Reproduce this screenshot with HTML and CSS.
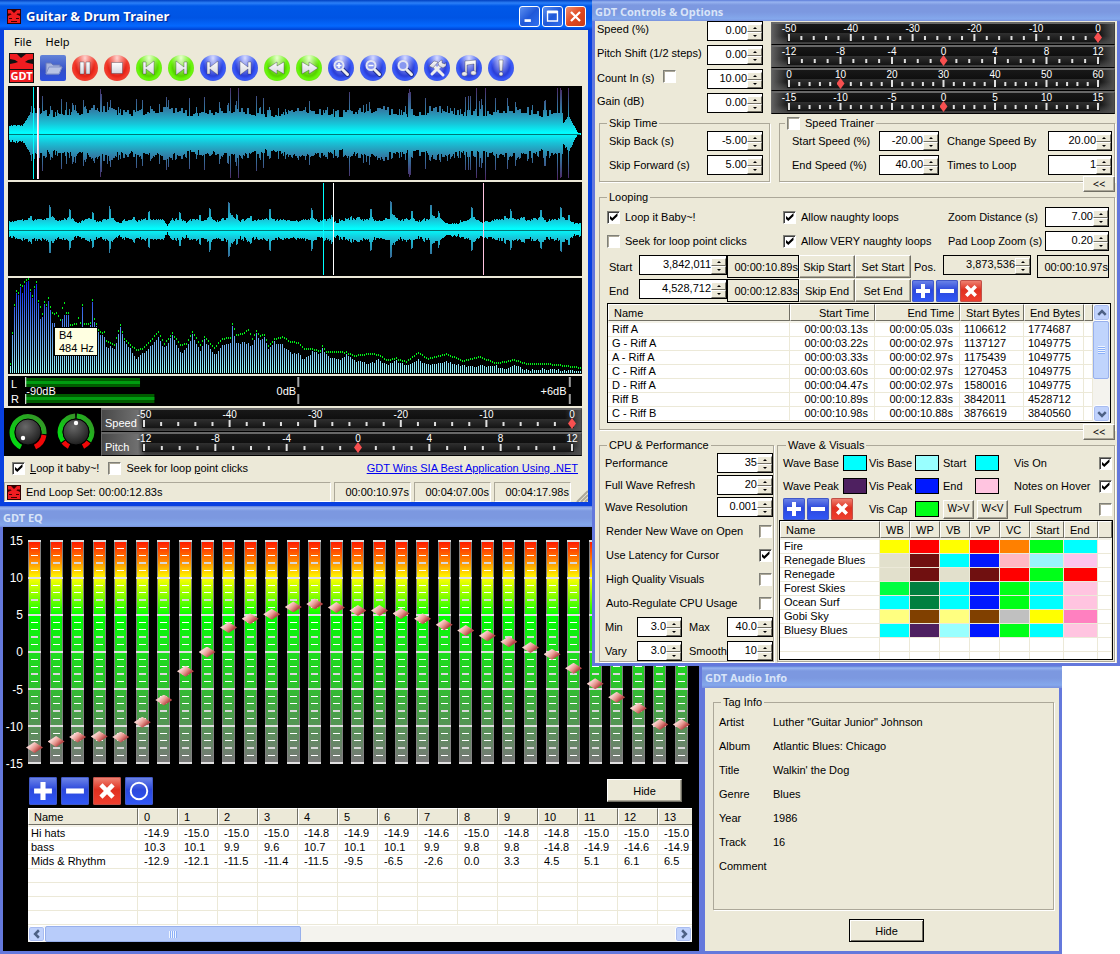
FILE: index.html
```html
<!DOCTYPE html>
<html lang="en">
<head>
<meta charset="utf-8">
<title>Guitar &amp; Drum Trainer</title>
<link rel="stylesheet" href="styles.css">
</head>
<body>
<svg class="defs" aria-hidden="true">
  <defs>
    <linearGradient id="metal" x1="0" y1="0" x2="0" y2="1"><stop offset="0" stop-color="#fff"/><stop offset="1" stop-color="#d4d4dc"/></linearGradient>
    <linearGradient id="waveFill" x1="0" y1="0" x2="0" y2="94" gradientUnits="userSpaceOnUse">
      <stop offset="0" stop-color="#4e2060"/><stop offset=".26" stop-color="#3080a8"/><stop offset=".4" stop-color="#18c4d8"/><stop offset=".5" stop-color="#00ffff"/><stop offset=".6" stop-color="#18c4d8"/><stop offset=".74" stop-color="#3080a8"/><stop offset="1" stop-color="#4e2060"/>
    </linearGradient>
    <linearGradient id="specFill" x1="0" y1="0" x2="0" y2="96" gradientUnits="userSpaceOnUse">
      <stop offset="0" stop-color="#0a1cf0"/><stop offset=".35" stop-color="#3a68e8"/><stop offset=".8" stop-color="#7cc4f0"/><stop offset="1" stop-color="#98ffff"/>
    </linearGradient>
    <radialGradient id="knob" cx=".4" cy=".3" r=".8"><stop offset="0" stop-color="#686868"/><stop offset="1" stop-color="#141414"/></radialGradient>
    <linearGradient id="arc" x1="0" y1="1" x2="1" y2="0"><stop offset="0" stop-color="#00e010"/><stop offset="1" stop-color="#389028"/></linearGradient>
  </defs>
  <symbol id="brand" viewBox="0 0 14 15"><path fill="#300" d="M0 0h14v15H0z"/><path fill="#f01c20" d="M1 1h3l3 3 3-3h3v4H9l4 2v7H1V7l4-2H1z"/><path stroke="#400" fill="none" d="M1 5h3M10 5h3M2 9.500h3M9 9.500h3M4 12.500h6"/></symbol>
  <symbol id="folder" viewBox="0 0 26 26"><path d="M6 19V8h5l2 2h7v2h2l-3 7z" fill="#a8b4dc" stroke="#6878b8"/><path d="M6 19l3-7h13l-3 7z" fill="#b8c2e4" stroke="#8090c8"/></symbol>
  <symbol id="pause" viewBox="0 0 26 26"><path d="M8 7h4v12H8zM14 7h4v12h-4z"/></symbol>
  <symbol id="stop" viewBox="0 0 26 26"><path d="M7.500 7.500h11v11h-11z"/></symbol>
  <symbol id="prev" viewBox="0 0 26 26"><path d="M7 7h3v5l8-6v14l-8-6v5H7z"/></symbol>
  <symbol id="next" viewBox="0 0 26 26"><path d="M19 7h-3v5L8 6v14l8-6v5h3z"/></symbol>
  <symbol id="rew" viewBox="0 0 26 26"><path d="M13 7v4l7-4v12l-7-4v4l-9-6z"/></symbol>
  <symbol id="ff" viewBox="0 0 26 26"><path d="M13 7v4L6 7v12l7-4v4l9-6z"/></symbol>
  <symbol id="lens" viewBox="0 0 26 26"><path fill="none" stroke="#223088" stroke-width="5" stroke-linecap="round" d="M14.500 14.500l5 5"/><circle cx="11" cy="10.500" r="4.500" fill="#8898f0" stroke="#e4e6f2" stroke-width="2"/><path fill="none" stroke="#eee" stroke-width="3" stroke-linecap="round" d="M15 15l4.500 4.500"/></symbol>
  <symbol id="zin" viewBox="0 0 26 26"><use href="#lens"/><path d="M8.500 10.500h5M11 8v5" fill="none" stroke="#fff" stroke-width="1.500"/></symbol>
  <symbol id="zout" viewBox="0 0 26 26"><use href="#lens"/><path d="M8.500 10.500h5" fill="none" stroke="#fff" stroke-width="1.500"/></symbol>
  <symbol id="tools" viewBox="0 0 26 26"><path fill="none" stroke="#eee" stroke-width="3" stroke-linecap="round" d="M8 19l9-9M10 11l9 9"/><path d="M5 11l5-5 4 1-5 6zM16 6l2-1v3l3 1 1-2v4l-3 2-4-2-1-3z"/></symbol>
  <symbol id="note" viewBox="0 0 26 26"><path d="M9 6l11-1v13h-2V9l-7 1v9H9z"/><ellipse cx="8.500" cy="19" rx="2.800" ry="2.200"/><ellipse cx="17.500" cy="18" rx="2.800" ry="2.200"/></symbol>
  <symbol id="bang" viewBox="0 0 26 26"><path d="M11 5h4l-.5 11h-3z"/><circle cx="13" cy="19" r="2"/></symbol>
  <symbol id="plus" viewBox="0 0 22 22"><path d="M9 4h4v5h5v4h-5v5H9v-5H4V9h5z"/></symbol>
  <symbol id="minus" viewBox="0 0 22 22"><path d="M4 9h14v4H4z"/></symbol>
  <symbol id="cross" viewBox="0 0 22 22"><path d="M5 7.500L7.500 5 11 8.500 14.500 5 17 7.500 13.500 11l3.500 3.500-2.500 2.500-3.500-3.500L7.500 17 5 14.500 8.500 11z"/></symbol>
  <symbol id="ring" viewBox="0 0 22 22"><circle cx="11" cy="11" r="6.500" style="fill:none;stroke:#fff;stroke-width:1.500"/></symbol>
</svg>

<main class="desktop">

<section class="window eq" aria-label="GDT EQ">
  <h2 class="caption">GDT EQ</h2>
  <div class="eq-body">
    <div class="eq-graph">
      <div class="eq-scale"><span>15</span><span>10</span><span>5</span><span>0</span><span>-5</span><span>-10</span><span>-15</span></div>
      <div class="bands" id="bands"></div>
    </div>
    <div class="eq-tools">
      <button class="sq big" aria-label="Add"><svg><use href="#plus"/></svg></button>
      <button class="sq big" aria-label="Remove"><svg><use href="#minus"/></svg></button>
      <button class="sq big red" aria-label="Delete"><svg><use href="#cross"/></svg></button>
      <button class="sq big" aria-label="Reset"><svg><use href="#ring"/></svg></button>
      <button class="btn hide">Hide</button>
    </div>
    <div class="eq-list">
      <div class="clip">
      <table class="grid eq-table">
        <thead><tr><th class="name">Name</th><th>0</th><th>1</th><th>2</th><th>3</th><th>4</th><th>5</th><th>6</th><th>7</th><th>8</th><th>9</th><th>10</th><th>11</th><th>12</th><th>13</th></tr></thead>
        <tbody>
        <tr><td>Hi hats</td><td>-14.9</td><td>-15.0</td><td>-15.0</td><td>-15.0</td><td>-14.8</td><td>-14.9</td><td>-14.9</td><td>-14.6</td><td>-15.0</td><td>-14.8</td><td>-14.8</td><td>-15.0</td><td>-15.0</td><td>-15.0</td></tr>
        <tr><td>bass</td><td>10.3</td><td>10.1</td><td>9.9</td><td>9.6</td><td>10.7</td><td>10.1</td><td>10.1</td><td>9.9</td><td>9.8</td><td>9.8</td><td>-14.8</td><td>-14.9</td><td>-14.6</td><td>-14.9</td></tr>
        <tr><td>Mids &amp; Rhythm</td><td>-12.9</td><td>-12.1</td><td>-11.5</td><td>-11.4</td><td>-11.5</td><td>-9.5</td><td>-6.5</td><td>-2.6</td><td>0.0</td><td>3.3</td><td>4.5</td><td>5.1</td><td>6.1</td><td>6.5</td></tr>
        <tr><td></td><td></td><td></td><td></td><td></td><td></td><td></td><td></td><td></td><td></td><td></td><td></td><td></td><td></td><td></td></tr>
        <tr><td></td><td></td><td></td><td></td><td></td><td></td><td></td><td></td><td></td><td></td><td></td><td></td><td></td><td></td><td></td></tr>
        <tr><td></td><td></td><td></td><td></td><td></td><td></td><td></td><td></td><td></td><td></td><td></td><td></td><td></td><td></td><td></td></tr>
        <tr><td></td><td></td><td></td><td></td><td></td><td></td><td></td><td></td><td></td><td></td><td></td><td></td><td></td><td></td><td></td></tr>
        </tbody>
      </table>
      </div>
      <div class="scrollbar across">
        <button aria-label="Scroll left"><svg viewBox="0 0 8 8"><path d="M5.500 1l-3 3 3 3"/></svg></button>
        <span class="thumb"></span>
        <button class="far" aria-label="Scroll right"><svg viewBox="0 0 8 8"><path d="M2.500 1l3 3-3 3"/></svg></button>
      </div>
    </div>
  </div>
</section>

<section class="window info" aria-label="GDT Audio Info">
  <h2 class="caption">GDT Audio Info</h2>
  <div class="info-body">
    <fieldset>
      <legend>Tag Info</legend>
      <dl>
        <dt>Artist</dt><dd>Luther "Guitar Junior" Johnson</dd>
        <dt>Album</dt><dd>Atlantic Blues: Chicago</dd>
        <dt>Title</dt><dd>Walkin' the Dog</dd>
        <dt>Genre</dt><dd>Blues</dd>
        <dt>Year</dt><dd>1986</dd>
        <dt>Track</dt><dd>16</dd>
        <dt>Comment</dt><dd></dd>
      </dl>
    </fieldset>
    <button class="btn hide default">Hide</button>
  </div>
</section>

<section class="window controls" aria-label="GDT Controls and Options">
  <h2 class="caption">GDT Controls &amp; Options</h2>
  <div class="controls-body">
    <div class="top">
      <div class="params">
        <label for="speed">Speed (%)</label><span class="spin"><input id="speed" value="0.00"><span class="arrows"><button aria-label="Up"></button><button aria-label="Down"></button></span></span>
        <label for="pitch">Pitch Shift (1/2 steps)</label><span class="spin"><input id="pitch" value="0.00"><span class="arrows"><button aria-label="Up"></button><button aria-label="Down"></button></span></span>
        <span class="countin"><label for="count">Count In (s)</label><input type="checkbox" aria-label="Enable count in"></span><span class="spin"><input id="count" value="10.00"><span class="arrows"><button aria-label="Up"></button><button aria-label="Down"></button></span></span>
        <label for="gain">Gain (dB)</label><span class="spin"><input id="gain" value="0.00"><span class="arrows"><button aria-label="Up"></button><button aria-label="Down"></button></span></span>
      </div>
      <div class="gauges">
        <div class="gauge"><div class="scale" data-steps="25" data-major="5"><div class="nums"><span>-50</span><span>-40</span><span>-30</span><span>-20</span><span>-10</span><span>0</span></div><div class="track"><svg></svg><input type="range" min="-50" max="0" value="0" aria-label="Speed"></div></div></div>
        <div class="gauge"><div class="scale" data-steps="24" data-major="4"><div class="nums"><span>-12</span><span>-8</span><span>-4</span><span>0</span><span>4</span><span>8</span><span>12</span></div><div class="track"><svg></svg><input type="range" min="-12" max="12" value="0" aria-label="Pitch shift"></div></div></div>
        <div class="gauge"><div class="scale" data-steps="30" data-major="5"><div class="nums"><span>0</span><span>10</span><span>20</span><span>30</span><span>40</span><span>50</span><span>60</span></div><div class="track"><svg></svg><input type="range" min="0" max="60" value="10" aria-label="Count in"></div></div></div>
        <div class="gauge"><div class="scale" data-steps="30" data-major="5"><div class="nums"><span>-15</span><span>-10</span><span>-5</span><span>0</span><span>5</span><span>10</span><span>15</span></div><div class="track"><svg></svg><input type="range" min="-15" max="15" value="0" aria-label="Gain"></div></div></div>
      </div>
    </div>

    <div class="group pair-a">
      <fieldset class="skip">
        <legend>Skip Time</legend>
        <label for="sb">Skip Back (s)</label><span class="spin"><input id="sb" value="-5.00"><span class="arrows"><button aria-label="Up"></button><button aria-label="Down"></button></span></span>
        <label for="sf">Skip Forward (s)</label><span class="spin"><input id="sf" value="5.00"><span class="arrows"><button aria-label="Up"></button><button aria-label="Down"></button></span></span>
      </fieldset>
      <fieldset class="trainer">
        <legend><label class="check"><input type="checkbox">Speed Trainer</label></legend>
        <label for="ss">Start Speed (%)</label><span class="spin"><input id="ss" value="-20.00"><span class="arrows"><button aria-label="Up"></button><button aria-label="Down"></button></span></span>
        <label for="cs" class="second">Change Speed By</label><span class="spin"><input id="cs" value="20.00"><span class="arrows"><button aria-label="Up"></button><button aria-label="Down"></button></span></span>
        <label for="es">End Speed (%)</label><span class="spin"><input id="es" value="40.00"><span class="arrows"><button aria-label="Up"></button><button aria-label="Down"></button></span></span>
        <label for="tl" class="second">Times to Loop</label><span class="spin"><input id="tl" value="1"><span class="arrows"><button aria-label="Up"></button><button aria-label="Down"></button></span></span>
      </fieldset>
      <button class="btn fold">&lt;&lt;</button>
    </div>

    <div class="group">
      <fieldset class="looping">
        <legend>Looping</legend>
        <div class="loop-opts">
          <label class="check"><input type="checkbox" checked>Loop it Baby~!</label>
          <label class="check"><input type="checkbox" checked>Allow naughty loops</label>
          <label for="zd">Zoom Distance (s)</label><span class="spin"><input id="zd" value="7.00"><span class="arrows"><button aria-label="Up"></button><button aria-label="Down"></button></span></span>
          <label class="check"><input type="checkbox">Seek for loop point clicks</label>
          <label class="check"><input type="checkbox" checked>Allow VERY naughty loops</label>
          <label for="pz">Pad Loop Zoom (s)</label><span class="spin"><input id="pz" value="0.20"><span class="arrows"><button aria-label="Up"></button><button aria-label="Down"></button></span></span>
        </div>
        <div class="points">
          <label for="ls">Start</label><span class="spin wide"><input id="ls" value="3,842,011"><span class="arrows"><button aria-label="Up"></button><button aria-label="Down"></button></span></span><output class="time">00:00:10.89s</output><button class="btn">Skip Start</button><button class="btn">Set Start</button>
          <label for="lp" class="pos">Pos.</label><span class="spin wide flat"><input id="lp" value="3,873,536"><span class="arrows"><button aria-label="Up"></button><button aria-label="Down"></button></span></span><output class="time last">00:00:10.97s</output>
        </div>
        <div class="points">
          <label for="le">End</label><span class="spin wide"><input id="le" value="4,528,712"><span class="arrows"><button aria-label="Up"></button><button aria-label="Down"></button></span></span><output class="time">00:00:12.83s</output><button class="btn">Skip End</button><button class="btn">Set End</button>
          <span class="trio"><button class="sq" aria-label="Add"><svg><use href="#plus"/></svg></button><button class="sq" aria-label="Remove"><svg><use href="#minus"/></svg></button><button class="sq red" aria-label="Delete"><svg><use href="#cross"/></svg></button></span>
        </div>
        <div class="listbox loops">
          <table class="grid">
            <thead><tr><th class="c-name">Name</th><th class="c-time num">Start Time</th><th class="c-time num">End Time</th><th class="c-bytes">Start Bytes</th><th class="c-ends">End Bytes</th><th class="c-rest"></th></tr></thead>
            <tbody>
            <tr><td>Riff A</td><td class="num">00:00:03.13s</td><td class="num">00:00:05.03s</td><td>1106612</td><td>1774687</td><td></td></tr>
            <tr><td>G - Riff A</td><td class="num">00:00:03.22s</td><td class="num">00:00:02.97s</td><td>1137127</td><td>1049775</td><td></td></tr>
            <tr><td>A - Riff A</td><td class="num">00:00:03.33s</td><td class="num">00:00:02.97s</td><td>1175439</td><td>1049775</td><td></td></tr>
            <tr><td>C - Riff A</td><td class="num">00:00:03.60s</td><td class="num">00:00:02.97s</td><td>1270453</td><td>1049775</td><td></td></tr>
            <tr><td>D - Riff A</td><td class="num">00:00:04.47s</td><td class="num">00:00:02.97s</td><td>1580016</td><td>1049775</td><td></td></tr>
            <tr><td>Riff B</td><td class="num">00:00:10.89s</td><td class="num">00:00:12.83s</td><td>3842011</td><td>4528712</td><td></td></tr>
            <tr><td>C - Riff B</td><td class="num">00:00:10.98s</td><td class="num">00:00:10.88s</td><td>3876619</td><td>3840560</td><td></td></tr>
            </tbody>
          </table>
          <div class="scrollbar down">
            <button aria-label="Scroll up"><svg viewBox="0 0 8 8"><path d="M1 5.500l3-3 3 3"/></svg></button>
            <span class="thumb"></span>
            <button class="far" aria-label="Scroll down"><svg viewBox="0 0 8 8"><path d="M1 2.500l3 3 3-3"/></svg></button>
          </div>
        </div>
      </fieldset>
      <button class="btn fold">&lt;&lt;</button>
    </div>

    <div class="group pair-b">
      <fieldset class="cpu">
        <legend>CPU &amp; Performance</legend>
        <div class="cpu-row"><label for="pf">Performance</label><span class="spin"><input id="pf" value="35"><span class="arrows"><button aria-label="Up"></button><button aria-label="Down"></button></span></span></div>
        <div class="cpu-row"><label for="fw">Full Wave Refresh</label><span class="spin"><input id="fw" value="20"><span class="arrows"><button aria-label="Up"></button><button aria-label="Down"></button></span></span></div>
        <div class="cpu-row"><label for="wr">Wave Resolution</label><span class="spin"><input id="wr" value="0.001"><span class="arrows"><button aria-label="Up"></button><button aria-label="Down"></button></span></span></div>
        <label class="cpu-check">Render New Wave on Open<input type="checkbox"></label>
        <label class="cpu-check">Use Latency for Cursor<input type="checkbox" checked></label>
        <label class="cpu-check">High Quality Visuals<input type="checkbox"></label>
        <label class="cpu-check">Auto-Regulate CPU Usage<input type="checkbox"></label>
        <div class="limits">
          <label for="mn">Min</label><span class="spin"><input id="mn" value="3.0"><span class="arrows"><button aria-label="Up"></button><button aria-label="Down"></button></span></span>
          <label for="mx" class="r">Max</label><span class="spin"><input id="mx" value="40.0"><span class="arrows"><button aria-label="Up"></button><button aria-label="Down"></button></span></span>
          <label for="vy">Vary</label><span class="spin"><input id="vy" value="3.0"><span class="arrows"><button aria-label="Up"></button><button aria-label="Down"></button></span></span>
          <label for="sm" class="r">Smooth</label><span class="spin"><input id="sm" value="10"><span class="arrows"><button aria-label="Up"></button><button aria-label="Down"></button></span></span>
        </div>
      </fieldset>
      <fieldset class="visuals">
        <legend>Wave &amp; Visuals</legend>
        <div class="swatches">
          <label for="k1">Wave Base</label><input type="color" id="k1" value="#00ffff">
          <label for="k2">Vis Base</label><input type="color" id="k2" value="#99ffff">
          <label for="k3">Start</label><input type="color" id="k3" value="#00ffff">
          <label for="v1">Vis On</label><input type="checkbox" id="v1" checked>
          <label for="k4">Wave Peak</label><input type="color" id="k4" value="#4e2060">
          <label for="k5">Vis Peak</label><input type="color" id="k5" value="#0018ff">
          <label for="k6">End</label><input type="color" id="k6" value="#ffc4e0">
          <label for="v2">Notes on Hover</label><input type="checkbox" id="v2" checked>
          <span class="trio two"><button class="sq" aria-label="Add"><svg><use href="#plus"/></svg></button><button class="sq" aria-label="Remove"><svg><use href="#minus"/></svg></button><button class="sq red" aria-label="Delete"><svg><use href="#cross"/></svg></button></span>
          <label for="k7">Vis Cap</label><input type="color" id="k7" value="#00ff18">
          <span class="swap two"><button class="btn">W&gt;V</button><button class="btn">W&lt;V</button></span>
          <label for="v3">Full Spectrum</label><input type="checkbox" id="v3">
        </div>
        <div class="listbox themes">
          <table class="grid">
            <thead><tr><th>Name</th><th class="c30">WB</th><th class="c30">WP</th><th class="c30">VB</th><th class="c30">VP</th><th class="c30">VC</th><th class="c34">Start</th><th class="c34">End</th><th class="c14"></th></tr></thead>
            <tbody>
            <tr><td>Fire</td><td class="yellow"></td><td class="crimson"></td><td class="yellow"></td><td class="crimson"></td><td class="orange"></td><td class="lime"></td><td class="cyan"></td><td></td></tr>
            <tr><td>Renegade Blues</td><td class="bone"></td><td class="maroon"></td><td class="cyan"></td><td class="blue"></td><td class="salmon"></td><td class="ice"></td><td class="orchid"></td><td></td></tr>
            <tr><td>Renegade</td><td class="bone"></td><td class="maroon"></td><td class="bone"></td><td class="maroon"></td><td class="crimson"></td><td class="lime"></td><td class="crimson"></td><td></td></tr>
            <tr><td>Forest Skies</td><td class="leaf"></td><td class="forest"></td><td class="cyan"></td><td class="blue"></td><td class="lime"></td><td class="cyan"></td><td class="pink"></td><td></td></tr>
            <tr><td>Ocean Surf</td><td class="cyan"></td><td class="forest"></td><td class="cyan"></td><td class="blue"></td><td class="lime"></td><td class="cyan"></td><td class="pink"></td><td></td></tr>
            <tr><td>Gobi Sky</td><td class="sand"></td><td class="brown"></td><td class="sand"></td><td class="brown"></td><td class="silver"></td><td class="yellow"></td><td class="hot"></td><td></td></tr>
            <tr><td>Bluesy Blues</td><td class="cyan"></td><td class="plum"></td><td class="aqua"></td><td class="blue"></td><td class="lime"></td><td class="cyan"></td><td class="pink"></td><td></td></tr>
            <tr><td></td><td></td><td></td><td></td><td></td><td></td><td></td><td></td><td></td></tr>
            <tr><td></td><td></td><td></td><td></td><td></td><td></td><td></td><td></td><td></td></tr>
            </tbody>
          </table>
        </div>
      </fieldset>
    </div>
  </div>
</section>

<section class="window player" aria-label="Guitar and Drum Trainer">
  <header class="titlebar">
    <svg class="app-icon"><use href="#brand"/></svg>
    <h1>Guitar &amp; Drum Trainer</h1>
    <button class="sys" aria-label="Minimize"><svg viewBox="0 0 21 21"><path d="M5 15h7" stroke-width="3"/></svg></button>
    <button class="sys" aria-label="Maximize"><svg viewBox="0 0 21 21"><path d="M5 5.500h11" stroke-width="3"/><path d="M5 5h11v10.500H5z" stroke-width="1.500"/></svg></button>
    <button class="sys close" aria-label="Close"><svg viewBox="0 0 21 21"><path d="M5.500 5.500l10 10M15.500 5.500l-10 10" stroke-width="2.500"/></svg></button>
  </header>
  <div class="player-body">
    <nav class="menu"><button>File</button><button>Help</button></nav>
    <div class="toolbar">
      <svg class="logo" viewBox="0 0 25 30" role="img" aria-label="GDT"><path d="M0 0h25v30H0z" fill="#111"/><path fill="#f01c20" d="M1 1h7l4 4 5-4h7v5l-5 1-3 2 3 1 5 1v5H1v-5l5-1 3-1-3-2-5-1z"/><path fill="#f01c20" d="M1 17h23v12H1z"/><text x="12.500" y="27" text-anchor="middle">GDT</text></svg>
      <button class="tile" aria-label="Open"><svg><use href="#folder"/></svg></button>
      <button class="round red" aria-label="Pause"><svg><use href="#pause"/></svg></button>
      <button class="round red" aria-label="Stop"><svg><use href="#stop"/></svg></button>
      <button class="round green" aria-label="Skip to loop start"><svg><use href="#prev"/></svg></button>
      <button class="round green" aria-label="Skip to loop end"><svg><use href="#next"/></svg></button>
      <button class="round" aria-label="Set loop start"><svg><use href="#prev"/></svg></button>
      <button class="round" aria-label="Set loop end"><svg><use href="#next"/></svg></button>
      <button class="round green" aria-label="Rewind"><svg><use href="#rew"/></svg></button>
      <button class="round green" aria-label="Fast forward"><svg><use href="#ff"/></svg></button>
      <button class="round" aria-label="Zoom in"><svg><use href="#zin"/></svg></button>
      <button class="round" aria-label="Zoom out"><svg><use href="#zout"/></svg></button>
      <button class="round" aria-label="Zoom"><svg><use href="#lens"/></svg></button>
      <button class="round" aria-label="Options"><svg><use href="#tools"/></svg></button>
      <button class="round" aria-label="Audio info"><svg><use href="#note"/></svg></button>
      <button class="round" aria-label="About"><svg><use href="#bang"/></svg></button>
    </div>
    <div class="screens">
      <svg class="screen" id="wave" viewBox="0 0 574 94" preserveAspectRatio="none" role="img" aria-label="Full waveform"></svg>
      <svg class="screen" id="zoomwave" viewBox="0 0 574 94" preserveAspectRatio="none" role="img" aria-label="Zoomed waveform"></svg>
      <div class="spectrum">
        <svg class="screen tall" id="spec" viewBox="0 0 574 96" preserveAspectRatio="none" role="img" aria-label="Spectrum"></svg>
        <div class="tip" role="tooltip">B4<br>484 Hz</div>
      </div>
      <svg class="meter" role="img" aria-label="Level meter">
        <g class="bar"><rect x="3%" y="2" width="20%" height="9"/><rect x="3%" y="18" width="22.500%" height="9"/></g>
        <g class="glow"><rect x="3%" y="5" width="20%" height="3"/><rect x="3%" y="21" width="22.500%" height="3"/></g>
        <g class="edge"><rect x="3%" y="1" width="1" height="10"/><rect x="3%" y="18" width="1" height="10"/></g>
        <g class="mark"><rect x="50.400%" y="1" width="2" height="10"/><rect x="50.400%" y="18" width="2" height="10"/><rect x="97.700%" y="1" width="2" height="10"/><rect x="97.700%" y="18" width="2" height="10"/></g>
        <text x="3" y="12">L</text><text x="3" y="27">R</text><text x="3.200%" y="19">-90dB</text><text x="50.200%" y="19" text-anchor="end">0dB</text><text x="97.300%" y="19" text-anchor="end">+6dB</text>
      </svg>
    </div>
    <div class="deck">
      <div class="knobs">
        <svg viewBox="0 0 38 38" role="img" aria-label="Volume"><g fill="none" stroke-width="5"><path stroke="url(#arc)" d="M12 34A16 16 0 1 1 35 21"/><path stroke="#f00808" d="M35 22A16 16 0 0 1 26 34"/></g><circle cx="19" cy="19" r="13" fill="url(#knob)" stroke="#000"/><circle cx="14" cy="25" r="2.200" fill="#fff"/></svg>
        <svg viewBox="0 0 38 38" role="img" aria-label="Balance"><g fill="none" stroke-width="5"><path stroke="url(#arc)" d="M6 28A16 16 0 0 1 18.200 3"/><path stroke="url(#arc)" d="M19.800 3A16 16 0 0 1 32 28"/><path stroke="#f00808" d="M6.500 29A16 16 0 0 0 12 33.500M31.500 29A16 16 0 0 1 26 33.500"/></g><circle cx="19" cy="19" r="13" fill="url(#knob)" stroke="#000"/><circle cx="19" cy="10" r="2.200" fill="#fff"/></svg>
      </div>
      <div class="gauges">
        <div class="gauge named"><label for="g1">Speed</label><div class="scale" data-steps="25" data-major="5"><div class="nums"><span>-50</span><span>-40</span><span>-30</span><span>-20</span><span>-10</span><span>0</span></div><div class="track"><svg></svg><input id="g1" type="range" min="-50" max="0" value="0"></div></div></div>
        <div class="gauge named"><label for="g2">Pitch</label><div class="scale" data-steps="24" data-major="4"><div class="nums"><span>-12</span><span>-8</span><span>-4</span><span>0</span><span>4</span><span>8</span><span>12</span></div><div class="track"><svg></svg><input id="g2" type="range" min="-12" max="12" value="0"></div></div></div>
      </div>
    </div>
    <div class="quick">
      <label class="check"><input type="checkbox" checked><span><u>L</u>oop it baby~!</span></label>
      <label class="check"><input type="checkbox"><span>Seek for loop <u>p</u>oint clicks</span></label>
      <a href="#">GDT Wins SIA Best Application Using .NET</a>
    </div>
    <footer class="status">
      <span class="msg"><svg class="app-icon"><use href="#brand"/></svg>End Loop Set: 00:00:12.83s</span>
      <span class="cell">00:00:10.97s</span><span class="cell">00:04:07.00s</span><span class="cell">00:04:17.98s</span>
      <svg class="grip" viewBox="0 0 12 12"><path d="M1 12L12 1M5 12l7-7M9 12l3-3"/></svg>
    </footer>
  </div>
</section>
</main>
<script src="app.js"></script>
</body>
</html>
```
FILE: styles.css
```css
* { box-sizing: border-box; }
html, body { margin: 0; height: 100%; }
body {
  overflow: hidden;
  background: #fff;
  color: #000;
  font: 11px/14px "Liberation Sans", Arial, sans-serif;
}
button, input { font: inherit; color: inherit; margin: 0; padding: 0; }
button { border: 0; background: none; }
h1, h2, dl, dd { margin: 0; }
svg { display: block; }
.defs { position: absolute; width: 0; height: 0; }
.desktop { position: relative; min-height: 954px; }

/* windows */
.window { position: absolute; }
.eq { left: 0; top: 506px; width: 702px; }
.info { left: 702px; top: 666px; width: 360px; }
.controls { left: 592px; right: 0; top: 0; }
.player { left: 0; top: 0; width: 592px; }
.eq, .info, .controls {
  border: solid #6478dc;
  border-width: 0 3px 3px;
  background: #ece9d8;
}
.caption {
  margin: 0 -3px;
  padding: 4px 3px 0;
  height: 21px;
  font: bold 11px/16px "Noto Sans", sans-serif;
  color: #d8e4f8;
  background: linear-gradient(#5c7cd8, #98b4f0 2px, #7c98e0 5px, #7c98e0 12px, #84a8ec 19px, #7890dc);
}
.info .caption { height: 22px; }

/* shared controls */
.btn {
  background: #ece9d8;
  border: 1px solid;
  border-color: #fff #716f64 #716f64 #fff;
  box-shadow: inset -1px -1px 0 #aca899;
  text-align: center;
  white-space: nowrap;
}
.btn.hide { width: 75px; height: 23px; }
.btn.default { border-color: #000; box-shadow: inset 1px 1px 0 #fff, inset -1px -1px 0 #716f64; }
.spin {
  display: flex;
  width: 56px;
  height: 20px;
  background: #fff;
  border: 1px solid #000;
}
.spin input {
  flex: 1;
  min-width: 0;
  height: 15px;
  border: 0;
  background: none;
  text-align: right;
  outline: 0;
}
.arrows { display: flex; flex-direction: column; width: 15px; padding-top: 2px; }
.arrows button {
  flex: 1;
  display: grid;
  place-items: center;
  background: #ece9d8;
  border: 1px solid;
  border-color: #fff #716f64 #716f64 #fff;
}
.arrows button::before { content: ""; border: 2px solid transparent; border-top: 0; border-bottom-color: #000; }
.arrows button + button::before { border-top: 2px solid #000; border-bottom: 0; }
.spin.wide { width: 88px; }
.spin.flat { background: #ece9d8; }
input[type="checkbox"] {
  appearance: none;
  flex: none;
  display: grid;
  place-items: center;
  width: 13px;
  height: 13px;
  background: #fff;
  border: 1px solid;
  border-color: #808078 #fff #fff #808078;
  box-shadow: inset 1px 1px 0 #404040;
}
input[type="checkbox"]:not(:checked) { box-shadow: inset 1px 1px 0 #aca899; }
input[type="checkbox"]:checked::before {
  content: "";
  width: 8px;
  height: 8px;
  background: #000;
  clip-path: polygon(0 30%, 35% 62%, 100% 0, 100% 38%, 35% 100%, 0 68%);
}
.check { display: flex; align-items: center; gap: 5px; white-space: nowrap; }
fieldset {
  min-width: 0;
  margin: 0;
  padding: 0;
  border: 1px solid #aca899;
  box-shadow: 1px 1px 0 #fff;
}
legend { margin-left: 7px; padding: 0 2px; height: 14px; background: #ece9d8; }
.sq {
  display: block;
  width: 22px;
  height: 22px;
  border-radius: 2px;
  background: linear-gradient(#7088e8, #2c48dc 45%, #3058f8);
  box-shadow: inset 0 0 0 1px #4058c8;
}
.sq.red { background: linear-gradient(#f08878, #e03020 45%, #f04030); box-shadow: inset 0 0 0 1px #c05048; }
.sq.big { width: 28px; height: 28px; }
.sq svg { width: 100%; height: 100%; fill: #fff; }
.trio { display: flex; gap: 2px; }

/* list views */
.grid { width: 100%; table-layout: fixed; border-collapse: separate; border-spacing: 0; background: #fff; }
.grid th {
  height: 17px;
  padding: 0 5px;
  font-weight: normal;
  text-align: left;
  line-height: 14px;
  background: #ece9d8;
  border: 1px solid;
  border-color: #fff #716f64 #716f64 #fff;
  white-space: nowrap;
}
.grid td {
  height: 14px;
  padding: 0 6px 0 4px;
  line-height: 13px;
  border: solid #ece9d8;
  border-width: 0 1px 1px 0;
  white-space: nowrap;
  overflow: hidden;
}
.grid tbody tr:first-child td { height: 16px; border-top: 2px solid #f4f2e8; }
.grid .num { text-align: right; }
.listbox { border: 1px solid #000; background: #fff; overflow: hidden; }
.scrollbar { display: flex; background: #f4f3ee; }
.scrollbar.down { flex-direction: column; width: 17px; }
.scrollbar button {
  display: grid;
  place-items: center;
  width: 17px;
  height: 17px;
  background: #c0d2fc;
  border: 1px solid #fff;
  border-radius: 3px;
  box-shadow: inset 0 0 0 1px #a8bcf0;
}
.scrollbar svg { width: 10px; height: 10px; fill: none; stroke: #4d6185; stroke-width: 2; }
.scrollbar .far { margin: auto 0 0; }
.scrollbar.across button { height: 16px; }
.scrollbar.across .far { margin: 0 0 0 auto; }
.thumb {
  border: 1px solid #98b0ec;
  border-radius: 2px;
  background: #c0d4fc;
}
.down .thumb { width: 16px; height: 58px; background: repeating-linear-gradient(#eef4fe 0 1px, #8cb0f8 1px 2px) center / 7px 8px no-repeat #c0d4fc; }
.across .thumb { width: 256px; background: repeating-linear-gradient(90deg, #eef4fe 0 1px, #8cb0f8 1px 2px) center / 8px 7px no-repeat #b8ccfa; }

/* horizontal gauges */
.gauge {
  display: flex;
  height: 23px;
  padding: 0 16px 0 17px;
  border: solid;
  border-width: 2px 1px 1px;
  border-color: #686868 #404040 #000 #686868;
  background: linear-gradient(90deg, #606060, transparent 18px, transparent calc(100% - 16px), #505050), linear-gradient(#181818, #0c0c0c 60%, #484848);
}
.scale { flex: 1; }
.nums { display: flex; justify-content: space-between; height: 9px; font-size: 10px; line-height: 9px; color: #fff; }
.nums span { display: flex; justify-content: center; width: 0; }
.track { display: grid; height: 9px; margin: 0 -2px; background: linear-gradient(#303030, #141414); }
.track svg, .track input { grid-area: 1 / 1; }
.track svg { width: calc(100% - 4px); height: 9px; margin-left: 1px; overflow: visible; fill: #e0e0e0; }
.track input { width: calc(100% + 4px); height: 11px; margin: -1px -2px; background: none; appearance: none; }
.track input::-webkit-slider-thumb {
  appearance: none;
  width: 8px;
  height: 11px;
  background: #f85050;
  clip-path: polygon(50% 0, 100% 50%, 50% 100%, 0 50%);
}

/* controls window */
.controls-body { padding: 1px 2px 1px 0; }
.top { display: grid; grid-template-columns: 168px 1fr; gap: 8px; }
.params { display: grid; grid-template-columns: 1fr 56px; grid-auto-rows: 20px; gap: 4px 0; margin-top: -1px; padding-left: 2px; }
.params label { padding-top: 1px; white-space: nowrap; }
.countin { display: flex; gap: 9px; padding-top: 1px; }
.group { position: relative; margin: 8px 0 0 4px; }
.fold { position: absolute; right: 0; bottom: -10px; width: 32px; height: 16px; line-height: 12px; font-family: "Noto Sans", sans-serif; }
.pair-a { display: grid; grid-template-columns: 171px 1fr; gap: 9px; margin-top: 2px; }
.skip, .trainer { display: grid; gap: 4px 0; align-items: center; padding: 1px 6px 6px 9px; }
.skip { grid-template-columns: 1fr 56px; }
.skip legend { margin-left: -2px; }
.trainer { grid-template-columns: 87px 60px 1fr 64px; padding: 1px 2px 6px 12px; }
.trainer .spin { width: auto; }
.trainer label { white-space: nowrap; }
.trainer .second { padding-left: 8px; }
.trainer legend { margin-left: -7px; }
.looping { padding: 3px 3px 6px 7px; }
.looping legend { margin-left: 0; }
.loop-opts { display: grid; grid-template-columns: 176px 1fr 97px 64px; gap: 4px 0; align-items: center; padding-right: 2px; }
.loop-opts .spin { width: 64px; }
.points { display: flex; height: 23px; margin: 4px 2px 0 0; }
.points + .points { margin-top: 1px; }
.points label { width: 32px; padding: 5px 0 0 2px; }
.points .btn { width: 56px; }
.time { width: 72px; border: 1px solid #000; text-align: right; line-height: 22px; white-space: nowrap; }
.points .pos { padding-left: 3px; }
.last { margin-left: auto; }
.points .trio { margin-left: 1px; padding-top: 1px; }
.loops { display: flex; height: 120px; margin-top: 1px; }
.c-time { width: 85px; }
.c-bytes { width: 64px; }
.c-ends { width: 60px; }
.grid .c-rest { width: 9px; padding: 0; }
.loops .grid { flex: 1; align-self: flex-start; }
.loops th.num { padding-right: 5px; }
.pair-b { display: grid; grid-template-columns: 175px 1fr; gap: 3px; }
.cpu { padding: 1px 0 0 5px; }
.cpu legend { margin-left: 2px; }
.cpu-row, .cpu-check { display: flex; justify-content: space-between; align-items: center; height: 22px; }
.cpu-row { align-items: flex-start; line-height: 20px; }
.cpu-row .spin { line-height: 14px; }
.cpu-check { height: 24px; padding: 0 1px 0 1px; }
.limits { display: grid; grid-template-columns: 32px 45px 1fr 46px; gap: 4px 0; align-items: center; padding-top: 2px; }
.limits .spin { width: auto; }
.limits .r { padding-left: 7px; }
.visuals { padding: 0 1px 0 1px; }
.swatches {
  display: grid;
  grid-template-columns: 60px 26px 46px 28px 32px 39px 1fr 13px;
  grid-template-rows: 22px 24px 22px;
  align-items: center;
  padding: 0 1px 0 4px;
  white-space: nowrap;
}
.swatches input[type="color"] { width: 24px; height: 16px; padding: 0; border: 1px solid #000; background: none; appearance: none; }
input[type="color"]::-webkit-color-swatch-wrapper { padding: 0; }
input[type="color"]::-webkit-color-swatch { border: 0; border-radius: 0; }
.two { grid-column: span 2; }
.swap { display: flex; gap: 3px; }
.swap .btn { width: 31px; height: 19px; font-size: 10px; line-height: 14px; }
.themes { height: 140px; }
.c30 { width: 30px; }
.c34 { width: 34px; }
.c14 { width: 14px; }
.yellow { background: #ffff00; } .crimson { background: #ff0000; } .orange { background: #ff8000; }
.lime { background: #00ff18; } .cyan { background: #00ffff; } .bone { background: #e2e0cc; }
.maroon { background: #701010; } .blue { background: #0018ff; } .salmon { background: #ffb8c4; }
.ice { background: #98f4fc; } .orchid { background: #fcc4ec; } .leaf { background: #00ff40; }
.forest { background: #008040; } .pink { background: #ffc4e0; } .sand { background: #ffff80; }
.brown { background: #804000; } .silver { background: #c0c0c0; } .hot { background: #ff80c0; }
.plum { background: #4e2060; } .aqua { background: #99ffff; }

/* equaliser */
.eq-body { padding: 13px 7px 9px 0; background: #000; }
.eq-graph { display: grid; grid-template-columns: 20px 1fr; gap: 5px; padding-right: 4px; }
.eq-scale { display: flex; flex-direction: column; justify-content: space-between; margin: -6px 0 -7px; text-align: right; font-size: 12px; color: #fff; }
.bands { display: flex; justify-content: space-between; }
.band {
  display: grid;
  place-items: center;
  width: 13px;
  height: 224px;
  background:
    linear-gradient(#e0e0e0 2px, transparent 2px) 0 0 / 100% 37px,
    linear-gradient(transparent 8px, #fff 8px 9px, transparent 9px 15px, #fff 15px 16px, transparent 16px 22px, #d8d8d8 22px 24px, transparent 24px 30px, #fff 30px 31px, transparent 31px) 3px 0 / 7px 37px repeat-y,
    linear-gradient(90deg, #808080 1px, transparent 1px 12px, #808080 12px),
    linear-gradient(#ff1000, #ff8000 20px, #ffff00 38px, #00ff00 76px, #18e818 100px, #28c828 140px, #509850 180px, #787878 222px);
}
.band input {
  width: 17px;
  height: 233px;
  margin: -5px -2px;
  writing-mode: vertical-lr;
  direction: rtl;
  appearance: none;
  background: none;
}
.band input::-webkit-slider-thumb {
  appearance: none;
  width: 17px;
  height: 11px;
  background: linear-gradient(135deg, #f8d0cc 30%, #e89890 50%, #b84848 72%);
  clip-path: polygon(50% 0, 100% 50%, 50% 100%, 0 50%);
}
.eq-tools { display: flex; gap: 4px; padding: 13px 10px 0 26px; }
.eq-tools .hide { margin: 2px 0 0 auto; }
.eq-list { margin: 3px 0 0 25px; background: #fff; }
.clip { overflow: hidden; height: 118px; }
.eq-table { width: 670px; }
.eq-table th, .eq-table td { width: 40px; }
.eq-table th.name { width: 110px; }
.eq-table td { padding: 0 0 0 6px; }
.eq-table td:first-child { padding-left: 3px; }
.eq-list .scrollbar { height: 16px; }

/* audio info */
.info-body { padding: 7px 5px 9px 8px; height: 263px; }
.info fieldset { height: 215px; }
.info dl { display: grid; grid-template-columns: 54px 1fr; grid-auto-rows: 24px; padding: 1px 0 0 5px; line-height: 24px; }
.info .hide { display: block; margin: 9px 0 0 136px; }

/* player window */
.player { border: solid #0840e0; border-width: 0 4px 4px; background: #ece9d8; }
.titlebar {
  display: flex;
  align-items: center;
  gap: 2px;
  height: 30px;
  margin: 0 -4px;
  padding: 2px 6px 0 7px;
  background: linear-gradient(#0040c0, #2c80f8 3px, #0058e8 6px, #0054e4 18px, #0468ff 26px, #0040d0);
}
.titlebar h1 { flex: 1; padding-left: 3px; color: #fff; font: bold 13px/18px "Noto Sans", sans-serif; text-shadow: 1px 1px 1px #00208c; }
.app-icon { width: 14px; height: 15px; }
.sys { width: 21px; height: 21px; border: 1px solid #fff; border-radius: 3px; background: linear-gradient(135deg, #5c90f0, #2058d8 50%, #3070f0); }
.sys.close { background: linear-gradient(135deg, #f09070, #e04820 50%, #c83c18); }
.sys svg { width: 19px; height: 19px; fill: none; stroke: #fff; }
.menu { display: flex; gap: 14px; height: 22px; padding: 2px 10px 0; }
.menu button { font: 11px/14px "Noto Sans", sans-serif; }
.toolbar { display: flex; align-items: center; gap: 6px; height: 34px; padding: 0 5px 2px; }
.logo { width: 25px; height: 30px; }
.logo text { fill: #fff; font: bold 11px "Noto Sans", sans-serif; }
.round, .tile {
  width: 26px;
  height: 26px;
  border-radius: 50%;
  background: radial-gradient(ellipse at 50% 12%, #d8dcff, transparent 55%), radial-gradient(circle, #2c40d8 45%, #3858f8 60%, #5c6cc8);
}
.tile { border-radius: 2px; background: linear-gradient(#6484d8, #3450c8 60%, #2c50e0); }
.round.red { background: radial-gradient(ellipse at 50% 12%, #ffd4d0, transparent 55%), radial-gradient(circle, #e42418 45%, #f43828 60%, #d06058); }
.round.green { background: radial-gradient(ellipse at 50% 12%, #e8ffd0, transparent 55%), radial-gradient(circle, #58d400 45%, #68f808 60%, #80c048); }
.round svg, .tile svg { width: 26px; height: 26px; fill: url(#metal); stroke: rgba(40, 40, 60, .35); stroke-width: 1px; }
.screens { display: grid; gap: 2px; padding: 0 6px 0 4px; }
.screen { width: 100%; height: 94px; background: #000; }
.screen.tall { height: 96px; }
.spectrum { position: relative; }
.tip { position: absolute; left: 46px; top: 49px; padding: 1px 3px 0 4px; background: #ffffe1; border: 1px solid #000; line-height: 13px; white-space: nowrap; }
.meter { width: 100%; height: 30px; background: #000; }
.meter text { fill: #fff; font-size: 11px; }
.bar { fill: #005c00; }
.glow { fill: #009c10; }
.edge { fill: #fff; }
.mark { fill: #a0a0a0; }
.deck { display: grid; grid-template-columns: 97px 1fr; height: 48px; margin: 2px 6px 0 0; background: #000; }
.knobs { display: flex; align-items: center; gap: 10px; padding-left: 5px; }
.knobs svg { width: 38px; height: 38px; }
.deck .gauge { height: 24px; padding: 0 9px 0 0; }
.gauge.named { background: linear-gradient(90deg, #484848, #707070 36px, transparent 44px, transparent calc(100% - 16px), #505050), linear-gradient(#181818, #0c0c0c 60%, #484848); }
.named label { width: 42px; padding: 6px 0 0 3px; color: #fff; }
.quick { display: flex; align-items: center; height: 26px; padding: 0 10px 2px 8px; }
.quick .check + .check { margin-left: 9px; }
.quick a { margin-left: auto; color: #0000f0; }
.status { display: flex; gap: 3px; height: 20px; line-height: 18px; }
.status span { border: 1px solid; border-color: #aca899 #fff #fff #aca899; }
.status .msg { display: flex; flex: 1; align-items: center; gap: 5px; padding-left: 2px; }
.cell { width: 77px; text-align: right; padding-right: 1px; }
.grip { width: 12px; height: 12px; margin: auto 0 0 2px; stroke: #aca899; stroke-width: 2; }
```
FILE: app.js
```js
const NS = "http://www.w3.org/2000/svg";

function add(parent, name, attrs) {
  const el = document.createElementNS(NS, name);
  for (const k in attrs) el.setAttribute(k, attrs[k]);
  parent.appendChild(el);
}

let seed = 7;
function rand() {
  seed = (seed * 16807) % 2147483647;
  return seed / 2147483647;
}

/* tick marks of the gauges */
document.querySelectorAll(".scale").forEach((scale) => {
  const svg = scale.querySelector("svg");
  const steps = +scale.dataset.steps;
  const major = +scale.dataset.major;
  for (let i = 0; i <= steps; i++) {
    const big = i % major === 0;
    add(svg, "rect", { x: (i * 100) / steps + "%", y: big ? 1 : 3, width: 2, height: big ? 7 : 4 });
  }
});

/* equaliser bands */
const gains = [-12.9, -12.1, -11.5, -11.4, -11.5, -9.5, -6.5, -2.6, 0, 3.3, 4.5, 5.1, 6.1, 6.5, 6,
  5.6, 5.6, 5.2, 4.5, 3.7, 2.9, 2.2, 1.4, 0.6, -0.3, -2.2, -4.3, -6.1, -7.6, -9.8, -9.8];
const bands = document.getElementById("bands");
gains.forEach((g, i) => {
  const band = document.createElement("span");
  band.className = "band";
  band.innerHTML = `<input type="range" min="-15" max="15" step="0.1" value="${g}" aria-label="Band ${i}">`;
  bands.appendChild(band);
});

function drawWave(id, amp, cursors) {
  const svg = document.getElementById(id);
  let d = "";
  for (let x = 1; x < 573; x++) {
    const a = Math.min(46, Math.round(amp(x)));
    const b = Math.max(1, a - Math.round(rand() * 2));
    if (a > 0) d += `M${x} ${48 - a}h1v${a + b}h-1z`;
  }
  add(svg, "path", { d, fill: "url(#waveFill)", "shape-rendering": "crispEdges" });
  add(svg, "rect", { x: 1, y: 48, width: 571, height: 1, fill: "#007878" });
  cursors.forEach(([x, w, fill]) => add(svg, "rect", { x, y: 1, width: w, height: 92, fill }));
}

const spikes = { 92: 45, 93: 40, 222: 46, 230: 46, 158: 37, 196: 37, 341: 42, 400: 41, 401: 45, 402: 42,
  417: 36, 468: 46, 477: 46, 549: 46, 552: 46, 553: 44, 560: 46, 34: 38, 53: 35, 128: 35, 248: 38, 255: 36,
  460: 38, 473: 35, 487: 36, 537: 34, 462: 38, 457: 37, 181: 36 };
let hold = 22;
drawWave("wave", (x) => {
  if (x < 14) return 8 + rand();
  if (x < 22) return 8 + (x - 14) * 1.6;
  if (x > 569) return 1;
  if (x > 554 && x !== 560) return x < 560 ? 11 + (x - 555) * 1.4 : Math.max(1, 17 - (x - 561) * 1.9);
  if (spikes[x]) return spikes[x];
  const r = rand();
  if (x % 2) hold = 19 + r * r * 8 + 2 * Math.sin(x / 11);
  return hold + (rand() > 0.88 ? 3 + rand() * 6 : 0);
}, [[25, 1, "#00ffff"], [29, 1, "#fff"], [30, 1, "#ffc4e0"]]);

const hits = [[22, 13], [41, 24], [61, 20], [84, 17], [101, 22], [125, 12], [140, 18], [163, 15], [171, 17],
  [191, 15], [201, 20], [220, 27], [228, 15], [242, 14], [261, 21], [303, 21], [323, 14], [342, 13], [350, 13],
  [362, 20], [382, 28], [403, 18], [422, 25], [430, 18], [463, 22], [496, 14], [502, 20], [515, 13], [532, 20],
  [552, 22], [560, 14]];
drawWave("zoomwave", (x) => {
  let a = 7 + 2 * Math.sin(x / 19) + rand() * 2;
  for (const [p, h] of hits) {
    const t = x - p;
    if (t >= 0) a = Math.max(a, h * Math.exp(-t / 12) * 0.66 + (t < 2 ? h * 0.34 : 0) + rand() * 2);
    else if (t > -12) a = Math.max(a, 10 + t * 0.2 + rand() * 3);
  }
  return Math.min(a, 4 + Math.abs(x - 159) * 1.5);
}, [[315, 1, "#00ffff"], [325, 1, "#fff"], [475, 1, "#ffc4e0"]]);

/* spectrum: [bar index, bar height, cap height] */
const curve = [[0, 7, 9], [1, 38, 40], [2, 66, 68], [3, 80, 82], [4, 78, 80], [5, 86, 88], [6, 80, 87], [7, 88, 91],
  [8, 91, 93], [9, 92, 94], [10, 81, 83], [11, 75, 77], [12, 84, 86], [13, 89, 91], [14, 70, 72], [15, 54, 66],
  [16, 56, 59], [17, 69, 71], [18, 66, 68], [19, 72, 75], [20, 63, 66], [21, 50, 60], [22, 50, 59], [23, 46, 60],
  [25, 46, 53], [26, 54, 65], [27, 58, 70], [28, 58, 59], [29, 58, 59], [30, 44, 48], [33, 42, 49], [34, 44, 55],
  [35, 46, 50], [36, 66, 68], [37, 46, 49], [39, 44, 49], [40, 48, 50], [41, 71, 73], [42, 51, 54], [43, 47, 48],
  [44, 41, 42], [46, 38, 40], [47, 36, 41], [48, 26, 32], [50, 27, 30], [52, 24, 28], [54, 39, 42], [55, 46, 47],
  [57, 32, 34], [60, 25, 28], [63, 14, 23], [66, 20, 24], [70, 27, 32], [74, 36, 41], [77, 26, 29], [81, 38, 39],
  [85, 21, 28], [88, 25, 29], [91, 39, 41], [95, 22, 28], [97, 34, 36], [102, 19, 25], [106, 28, 34], [110, 30, 35],
  [111, 47, 49], [113, 30, 38], [116, 31, 39], [119, 30, 43], [121, 28, 34], [123, 40, 41], [125, 33, 37],
  [127, 36, 38], [129, 24, 27], [132, 32, 33], [136, 29, 36], [140, 21, 31], [144, 20, 30], [147, 14, 24],
  [151, 22, 24], [155, 20, 21], [156, 25, 27], [158, 19, 21], [164, 14, 21], [168, 19, 20], [172, 13, 17], [180, 10, 19],
  [184, 14, 18], [188, 9, 13], [193, 13, 14], [198, 8, 11], [204, 14, 20], [209, 9, 14], [218, 12, 19], [226, 8, 12],
  [235, 8, 16], [243, 8, 9], [247, 4, 11], [252, 8, 13], [258, 4, 9], [266, 5, 9], [274, 4, 8], [281, 3, 6], [286, 2, 5]];
const spec = document.getElementById("spec");
let bars = "", caps = "";
for (let i = 0, k = 0; i <= 285; i++) {
  while (curve[k + 1][0] < i) k++;
  const [x0, b0, c0] = curve[k], [x1, b1, c1] = curve[k + 1];
  const t = (i - x0) / (x1 - x0);
  const exact = t === 0 || t === 1;
  const h = Math.max(2, Math.round(b0 + (b1 - b0) * t - (exact ? 0 : rand() * 2)));
  const c = Math.max(h + 2, Math.round(c0 + (c1 - c0) * t));
  bars += `M${2 + 2 * i} ${95 - h}h1v${h}h-1z`;
  caps += `M${2 + 2 * i} ${94 - c}h1v2h-1z`;
}
add(spec, "path", { d: bars, fill: "url(#specFill)", "shape-rendering": "crispEdges" });
add(spec, "path", { d: caps, fill: "#00f018", "shape-rendering": "crispEdges" });
```
